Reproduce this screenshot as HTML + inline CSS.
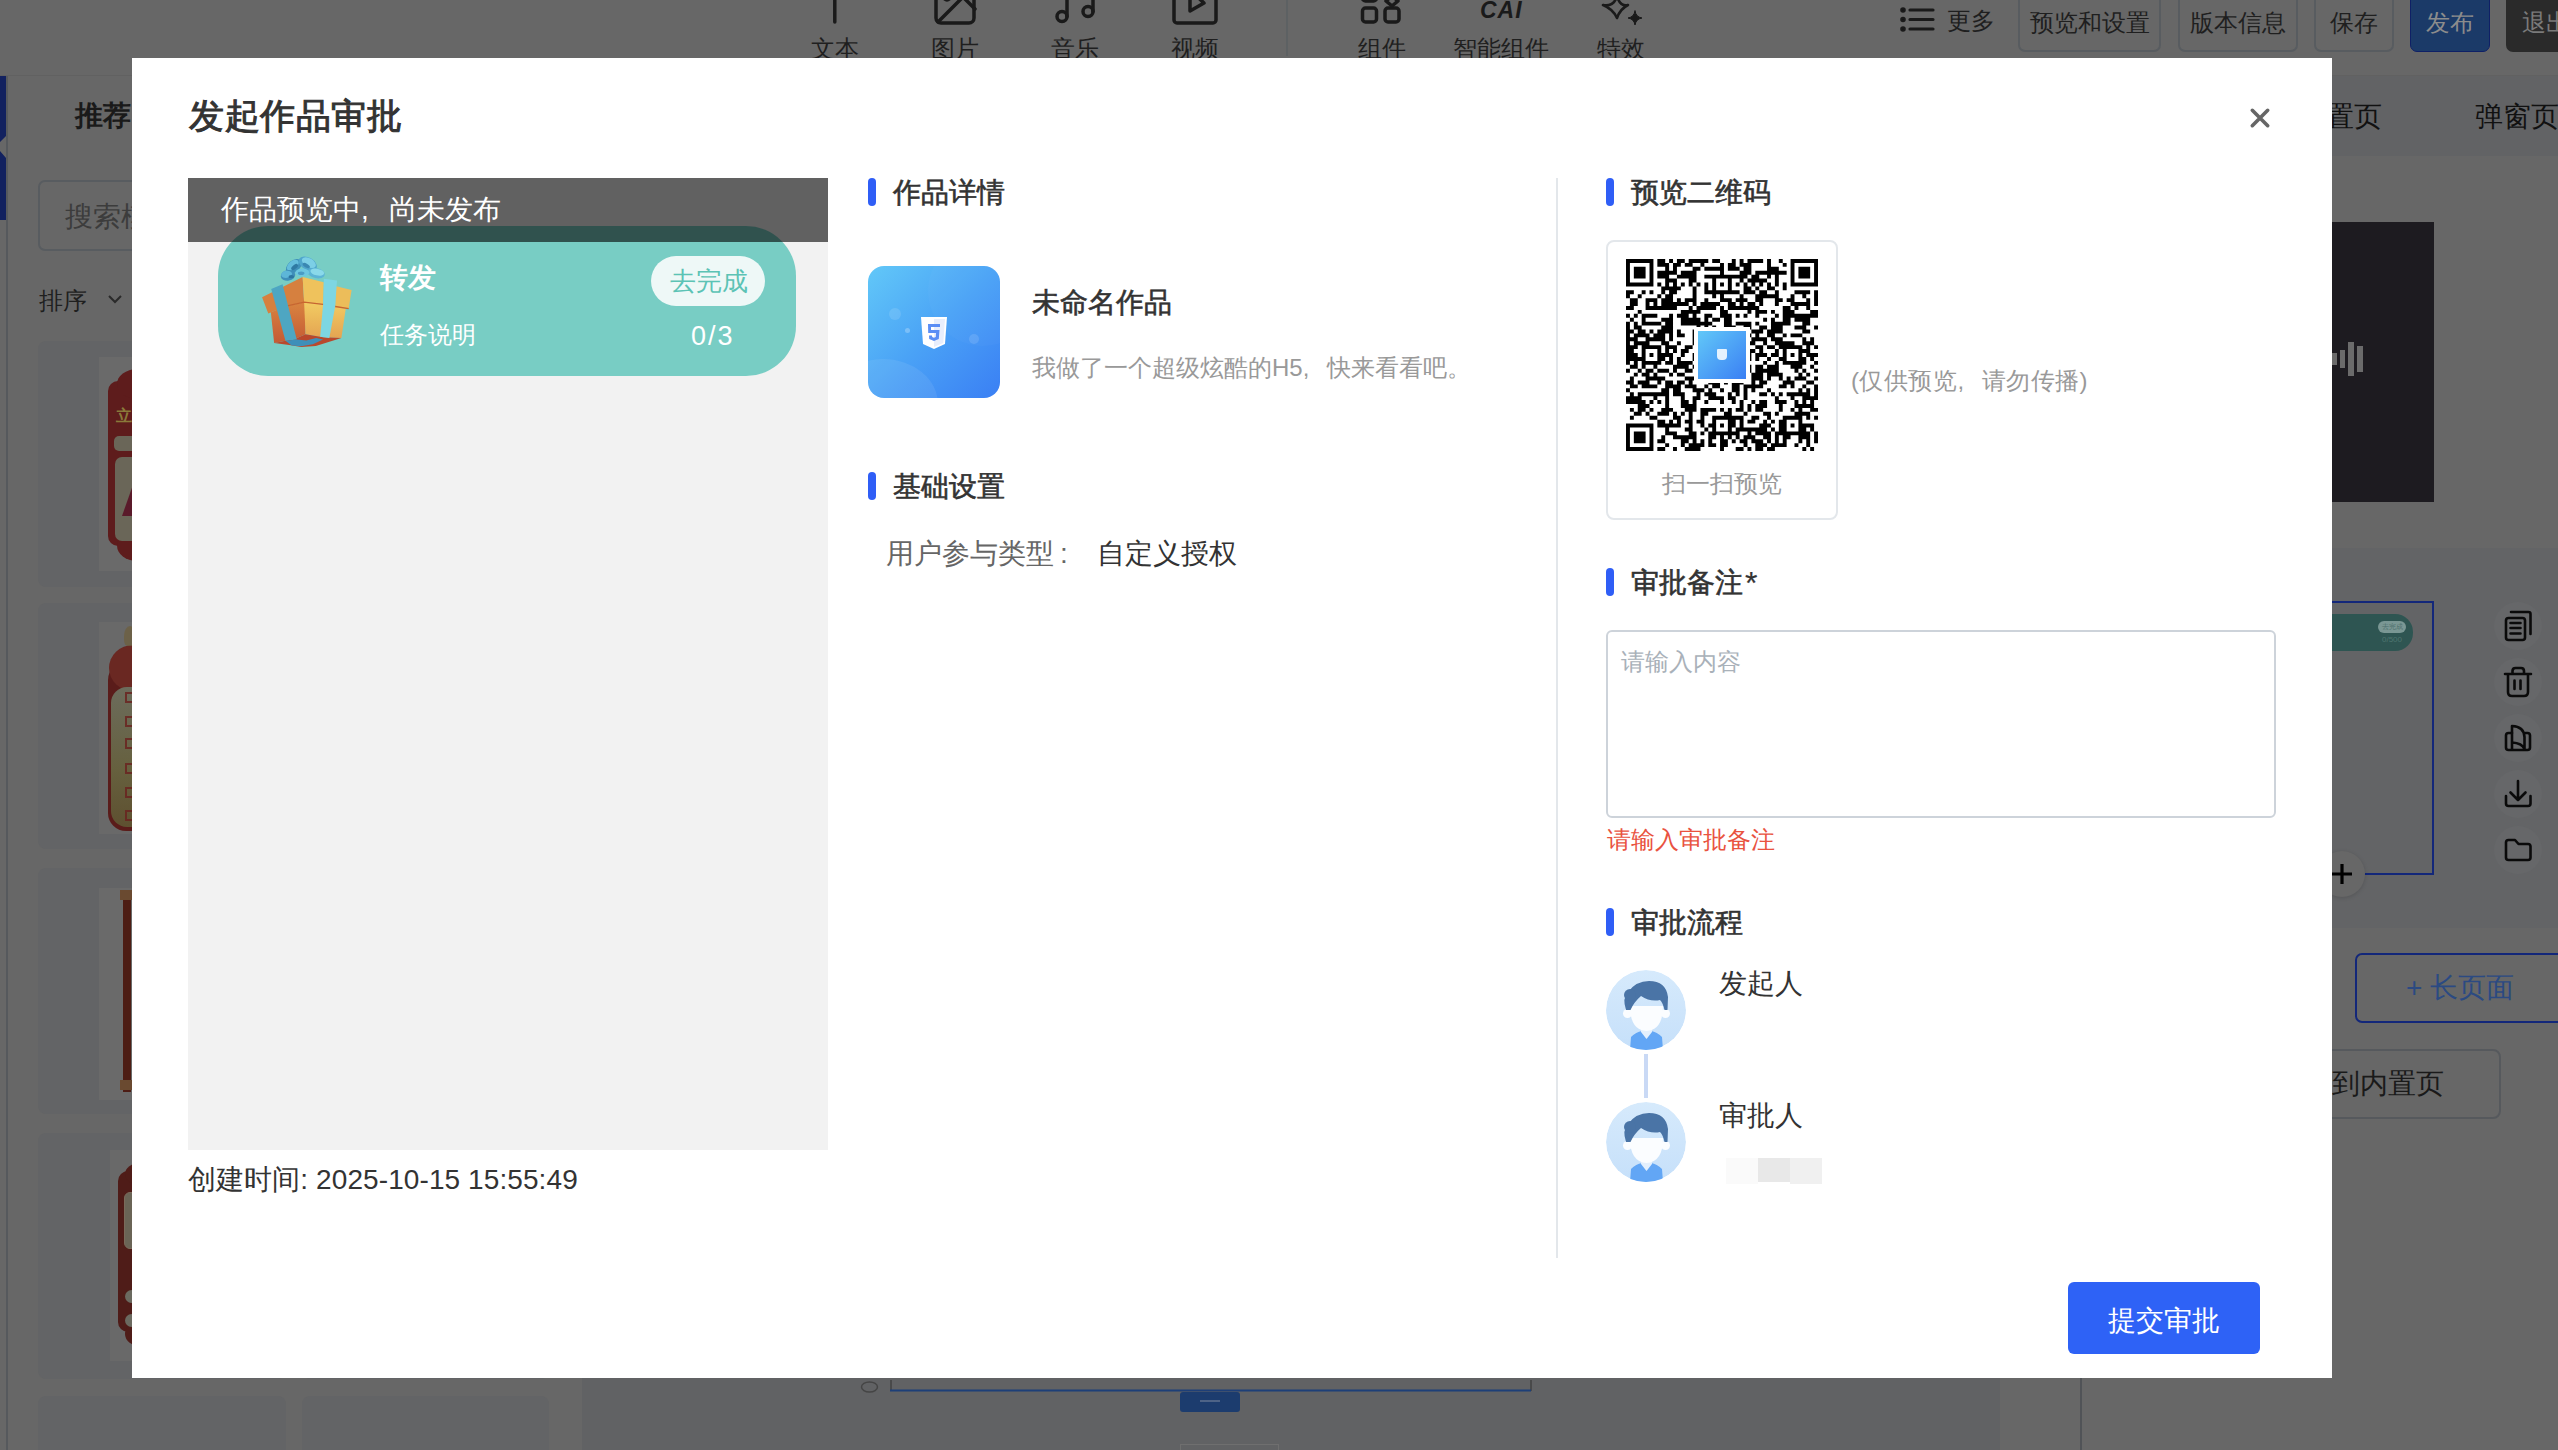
<!DOCTYPE html>
<html><head><meta charset="utf-8">
<style>
*{box-sizing:border-box;margin:0;padding:0}
html,body{width:2558px;height:1450px;overflow:hidden;background:#fff;font-family:"Liberation Sans",sans-serif;color:#333}
.a{position:absolute}
.t{position:absolute;white-space:nowrap;line-height:1}
#bg{position:absolute;left:0;top:0;width:2558px;height:1450px;background:#fff;overflow:hidden}
#ov{position:absolute;left:0;top:0;width:2558px;height:1450px;background:rgba(0,0,0,0.6)}
#modal{position:absolute;left:132px;top:58px;width:2200px;height:1320px;background:#fff;overflow:hidden}
.bar{position:absolute;width:8px;height:28px;border-radius:4px;background:#2f5ef6}
.sec{position:absolute;white-space:nowrap;line-height:1;font-size:28px;color:#333;-webkit-text-stroke:0.6px #333}
</style></head>
<body>
<div id="bg">
  <!-- header -->
  <div class="a" style="left:0;top:0;width:2558px;height:76px;background:#676767"></div>
  <div class="a" style="left:0;top:75px;width:2558px;height:1px;background:#616161"></div>
  <svg class="a" style="left:800px;top:0" width="880" height="30" viewBox="800 0 880 30" fill="none" stroke="#1a1a1a" stroke-width="3.5" stroke-linecap="round" stroke-linejoin="round">
    <path d="M834.8 -6V22"/>
    <rect x="936" y="-16" width="38" height="39" rx="5"/>
    <path d="M938 22L963 -3L975 9"/><circle cx="947" cy="-3" r="3"/>
    <circle cx="1062" cy="16.5" r="5"/><path d="M1067 16.5V-6"/>
    <circle cx="1088" cy="11.5" r="5"/><path d="M1093 11.5V-6"/>
    <rect x="1174" y="-16" width="42" height="39" rx="3"/>
    <path d="M1190 -10V11L1204 3Z"/>
    <rect x="1362.5" y="-14" width="14" height="15" rx="3"/>
    <rect x="1362.5" y="8" width="14" height="14" rx="3"/>
    <rect x="1385" y="8" width="14" height="14" rx="3"/>
    <path d="M1392 -4L1398 1L1392 6L1386 1Z"/>
    <path d="M1603 5Q1614 7 1617 -4Q1620 7 1628 5Q1620 9 1617 18Q1613 9 1603 5Z" stroke-width="2.6"/>
    <path d="M1635 11Q1636 17 1642 18Q1636 19 1635 25Q1634 19 1628 18Q1634 17 1635 11Z" fill="#1a1a1a" stroke-width="1"/>
  </svg>
  <div class="t" style="left:1480px;top:-1px;font-size:23px;font-weight:bold;font-style:italic;color:#1a1a1a;letter-spacing:1px">CAI</div>
  <div class="a" style="left:1286px;top:0;width:2px;height:56px;background:#5d6163"></div>
  <div class="t" style="left:811px;top:37px;font-size:24px;color:#1f1f1f">文本</div>
  <div class="t" style="left:931px;top:37px;font-size:24px;color:#1f1f1f">图片</div>
  <div class="t" style="left:1051px;top:37px;font-size:24px;color:#1f1f1f">音乐</div>
  <div class="t" style="left:1171px;top:37px;font-size:24px;color:#1f1f1f">视频</div>
  <div class="t" style="left:1358px;top:37px;font-size:24px;color:#1f1f1f">组件</div>
  <div class="t" style="left:1453px;top:37px;font-size:24px;color:#1f1f1f">智能组件</div>
  <div class="t" style="left:1597px;top:37px;font-size:24px;color:#1f1f1f">特效</div>
  <svg class="a" style="left:1898px;top:4px" width="40" height="32" viewBox="0 0 40 32" stroke="#1a1a1a" stroke-width="3.2" stroke-linecap="round">
    <path d="M12 6H35M12 15.5H35M12 25H35"/><circle cx="5" cy="6" r="1.2"/><circle cx="5" cy="15.5" r="1.2"/><circle cx="5" cy="25" r="1.2"/>
  </svg>
  <div class="t" style="left:1947px;top:9px;font-size:24px;color:#1f1f1f">更多</div>
  <div class="a" style="left:2018px;top:-10px;width:143px;height:62px;border:2px solid #585c60;border-radius:7px"></div>
  <div class="t" style="left:2030px;top:11px;font-size:24px;color:#1f1f1f">预览和设置</div>
  <div class="a" style="left:2178px;top:-10px;width:120px;height:62px;border:2px solid #585c60;border-radius:7px"></div>
  <div class="t" style="left:2190px;top:11px;font-size:24px;color:#1f1f1f">版本信息</div>
  <div class="a" style="left:2314px;top:-10px;width:80px;height:62px;border:2px solid #585c60;border-radius:7px"></div>
  <div class="t" style="left:2330px;top:11px;font-size:24px;color:#1f1f1f">保存</div>
  <div class="a" style="left:2410px;top:-10px;width:80px;height:62px;border:1.5px solid #0f2066;border-radius:7px;background:#1b3a68"></div>
  <div class="t" style="left:2426px;top:11px;font-size:24px;color:#8c8c8c">发布</div>
  <div class="a" style="left:2506px;top:-10px;width:80px;height:62px;border-radius:7px;background:#2a2a2a"></div>
  <div class="t" style="left:2522px;top:11px;font-size:24px;color:#7a7a7a">退出</div>

  <!-- left strip -->
  <div class="a" style="left:0;top:76px;width:7px;height:1374px;background:#676767"></div>
  <svg class="a" style="left:0;top:76px" width="7" height="144" viewBox="0 0 7 144"><path d="M0 0H6V60L0 66V75L6 82V144H0Z" fill="#12215f"/></svg>
  <div class="a" style="left:6px;top:76px;width:2px;height:1374px;background:#56595d"></div>
  <!-- left panel -->
  <div class="a" style="left:8px;top:76px;width:574px;height:1374px;background:#676767"></div>
  <div class="t" style="left:75px;top:102px;font-size:28px;font-weight:bold;color:#1a1a1a">推荐</div>
  <div class="a" style="left:38px;top:180px;width:520px;height:71px;border:2px solid #585c60;border-radius:7px"></div>
  <div class="t" style="left:65px;top:203px;font-size:28px;color:#3c3c3c">搜索模板</div>
  <div class="t" style="left:39px;top:289px;font-size:24px;color:#1f1f1f">排序</div>
  <svg class="a" style="left:106px;top:292px" width="18" height="14" viewBox="0 0 18 14"><path d="M3 4L9 10L15 4" fill="none" stroke="#2a2a2a" stroke-width="2"/></svg>
  <div class="a" style="left:38px;top:341px;width:248px;height:246px;border-radius:8px;background:#636466"></div><div class="a" style="left:302px;top:341px;width:247px;height:246px;border-radius:8px;background:#636466"></div><div class="a" style="left:38px;top:603px;width:248px;height:246px;border-radius:8px;background:#636466"></div><div class="a" style="left:302px;top:603px;width:247px;height:246px;border-radius:8px;background:#636466"></div><div class="a" style="left:38px;top:868px;width:248px;height:246px;border-radius:8px;background:#636466"></div><div class="a" style="left:302px;top:868px;width:247px;height:246px;border-radius:8px;background:#636466"></div><div class="a" style="left:38px;top:1133px;width:248px;height:246px;border-radius:8px;background:#636466"></div><div class="a" style="left:302px;top:1133px;width:247px;height:246px;border-radius:8px;background:#636466"></div><div class="a" style="left:38px;top:1396px;width:248px;height:246px;border-radius:8px;background:#636466"></div><div class="a" style="left:302px;top:1396px;width:247px;height:246px;border-radius:8px;background:#636466"></div>
  <div class="a" style="left:99px;top:357px;width:130px;height:214px;background:#6a6a6a"></div>
  <div class="a" style="left:108px;top:381px;width:110px;height:165px;border-radius:10px;background:#5e1c1c"></div>
  <div class="a" style="left:117px;top:369px;width:40px;height:30px;border-radius:50%;background:#5e1c1c"></div>
  <div class="a" style="left:117px;top:530px;width:40px;height:31px;border-radius:50%;background:#5e1c1c"></div>
  <div class="a" style="left:114px;top:436px;width:60px;height:15px;border-radius:5px;background:#6a6658"></div>
  <div class="a" style="left:115px;top:457px;width:60px;height:84px;border-radius:7px;background:#6a6658"></div>
  <div class="a" style="left:122px;top:482px;width:12px;height:34px;background:#5a1a2a;clip-path:polygon(100% 0,0 100%,100% 100%)"></div>
  <div class="t" style="left:116px;top:408px;font-size:16px;font-weight:bold;color:#8a7a3a">立</div>
  <div class="a" style="left:99px;top:622px;width:130px;height:212px;background:#696969"></div>
  <div class="a" style="left:108px;top:662px;width:110px;height:169px;border-radius:18px;background:#5a1c1a"></div>
  <div class="a" style="left:109px;top:645px;width:48px;height:46px;border-radius:50%;background:#6a2822"></div>
  <div class="a" style="left:124px;top:626px;width:12px;height:20px;border-radius:50% 50% 30% 30%;background:#6e5e3a;opacity:.7"></div>
  <div class="a" style="left:111px;top:687px;width:60px;height:140px;border-radius:16px;background:linear-gradient(#6c6c5c,#66603e 60%,#5e5030)"></div>
  <div class="a" style="left:125px;top:692px;width:7px;height:11px;border:2px solid #6a2420;border-right:none;opacity:.85"></div>
  <div class="a" style="left:125px;top:716px;width:7px;height:11px;border:2px solid #6a2420;border-right:none;opacity:.85"></div>
  <div class="a" style="left:125px;top:738px;width:7px;height:11px;border:2px solid #6a2420;border-right:none;opacity:.85"></div>
  <div class="a" style="left:125px;top:763px;width:7px;height:11px;border:2px solid #6a2420;border-right:none;opacity:.85"></div>
  <div class="a" style="left:125px;top:787px;width:7px;height:11px;border:2px solid #6a2420;border-right:none;opacity:.85"></div>
  <div class="a" style="left:125px;top:810px;width:7px;height:11px;border:2px solid #6a2420;border-right:none;opacity:.85"></div>
  <div class="a" style="left:99px;top:888px;width:130px;height:212px;background:#6a6a6a"></div>
  <div class="a" style="left:123px;top:892px;width:8px;height:200px;background:#4d1d14"></div>
  <div class="a" style="left:120px;top:890px;width:14px;height:10px;background:#6a4a30"></div>
  <div class="a" style="left:120px;top:1080px;width:14px;height:10px;background:#6a4a30"></div>
  <div class="a" style="left:110px;top:1150px;width:120px;height:211px;background:#696969"></div>
  <div class="a" style="left:118px;top:1171px;width:110px;height:161px;border-radius:10px;background:#4f1c18"></div>
  <div class="a" style="left:125px;top:1163px;width:30px;height:22px;border-radius:50%;background:#4f1c18"></div>
  <div class="a" style="left:125px;top:1322px;width:30px;height:24px;border-radius:50%;background:#4f1c18"></div>
  <div class="a" style="left:124px;top:1192px;width:50px;height:57px;border-radius:6px;border:1.5px solid #7a6a5a;background:#6a6456"></div>
  <div class="a" style="left:125px;top:1290px;width:13px;height:13px;border-radius:50%;background:#6b6a60"></div>
  <div class="a" style="left:125px;top:1314px;width:13px;height:13px;border-radius:50%;background:#6b6a60"></div>

  <!-- center canvas -->
  <div class="a" style="left:582px;top:76px;width:1418px;height:1374px;background:#616264"></div>
  <svg class="a" style="left:855px;top:1376px" width="700" height="74" viewBox="855 1376 700 74">
    <ellipse cx="869.5" cy="1387" rx="8" ry="5" fill="none" stroke="#454545" stroke-width="1.5"/>
    <path d="M891 1380V1390.5H1531V1380" fill="none" stroke="#3a3a3a" stroke-width="1.2"/>
    <path d="M890 1390.5H1531" stroke="#1d3f78" stroke-width="2"/>
    <rect x="1180" y="1392" width="60" height="20" rx="3" fill="#1c3c6e"/>
    <path d="M1200 1401H1220" stroke="#6f7f99" stroke-width="1.2"/>
    <rect x="1180.5" y="1444.5" width="98" height="10" fill="none" stroke="#6f6f6f" stroke-width="1"/>
  </svg>
  <!-- right side -->
  <div class="a" style="left:2000px;top:76px;width:80px;height:1374px;background:#676767"></div>
  <div class="a" style="left:2080px;top:76px;width:2px;height:1374px;background:#505357"></div>
  <div class="a" style="left:2082px;top:76px;width:476px;height:1374px;background:#676767"></div>
  <div class="a" style="left:2082px;top:76px;width:476px;height:80px;background:#626365"></div>
  <div class="t" style="left:2298px;top:103px;font-size:28px;color:#111">内置页</div>
  <div class="t" style="left:2475px;top:103px;font-size:28px;color:#111">弹窗页</div>
  <div class="a" style="left:2226px;top:222px;width:208px;height:280px;background:#1d1b20"></div>
  <div class="a" style="left:2331px;top:353px;width:6px;height:12px;background:#6b6b6b"></div><div class="a" style="left:2340px;top:350px;width:5px;height:18px;background:#6b6b6b"></div><div class="a" style="left:2348px;top:342px;width:6px;height:34px;background:#6b6b6b"></div><div class="a" style="left:2357px;top:346px;width:6px;height:26px;background:#6b6b6b"></div>
  <div class="a" style="left:2082px;top:548px;width:476px;height:380px;background:#636466"></div>
  <div class="a" style="left:2200px;top:601px;width:234px;height:274px;border:2px solid #13277a"></div>
  
  <div class="a" style="left:2220px;top:614px;width:193px;height:37px;border-radius:18px;background:#2e5552"></div>
  <div class="a" style="left:2378px;top:621px;width:28px;height:12px;border-radius:6px;background:#7a9794"></div><div class="t" style="left:2382px;top:623px;font-size:7px;color:#4a6e6a">去完成</div>
  <div class="t" style="left:2382px;top:636px;font-size:8px;color:#4f7571">0/500</div>
  <div class="a" style="left:2319px;top:851px;width:46px;height:46px;border-radius:50%;background:#676767;box-shadow:0 1px 4px rgba(0,0,0,0.15)"></div>
  <svg class="a" style="left:2330px;top:862px" width="24" height="24" viewBox="0 0 24 24"><path d="M12 2V22M2 12H22" stroke="#000" stroke-width="3.2"/></svg>
  <div class="a" style="left:2493.6px;top:601.5px;width:48px;height:48px;border-radius:50%;background:#666769"></div><div class="a" style="left:2493.6px;top:658.0px;width:48px;height:48px;border-radius:50%;background:#666769"></div><div class="a" style="left:2493.6px;top:713.5px;width:48px;height:48px;border-radius:50%;background:#666769"></div><div class="a" style="left:2493.6px;top:769.5px;width:48px;height:48px;border-radius:50%;background:#666769"></div><div class="a" style="left:2493.6px;top:826.0px;width:48px;height:48px;border-radius:50%;background:#666769"></div><svg class="a" style="left:2500px;top:600px" width="36" height="275" viewBox="2500 600 36 275" fill="none" stroke="#0a0a0a" stroke-width="2.6" stroke-linejoin="round" stroke-linecap="round">
  <rect x="2506" y="618" width="19" height="22" rx="2.5"/><path d="M2511 612H2528.5Q2530.5 612 2530.5 614V634"/><path d="M2510.5 623H2520.5M2510.5 628H2520.5M2510.5 633.5H2520.5"/>
  <path d="M2505 674H2531M2512.5 674V671Q2512.5 668 2515.5 668H2521Q2524 668 2524 671V674M2508 674V692Q2508 696 2512 696H2524Q2528 696 2528 692V674M2514.5 680.5V689M2520.5 680.5V689"/>
  <path d="M2512 733H2508.5Q2506 733 2506 735.5V747.5Q2506 750 2508.5 750H2527.5Q2530 750 2530 747.5V735.5Q2530 733 2527.5 733H2525.5"/>
  <path d="M2512 749V726Q2524 726.5 2524.5 737V749Q2522 743 2512 742.5"/>
  <path d="M2518 781V800M2510.5 792.5L2518 800L2525.5 792.5M2506 796V803.5Q2506 806 2508.5 806H2528Q2530.5 806 2530.5 803.5V796"/>
  <path d="M2506 842.5Q2506 840 2508.5 840H2515L2518.5 844H2528Q2530.5 844 2530.5 846.5V857.5Q2530.5 860 2528 860H2508.5Q2506 860 2506 857.5Z"/>
</svg>
  <div class="a" style="left:2355px;top:953px;width:240px;height:70px;border:2px solid #13277a;border-radius:7px"></div>
  <div class="t" style="left:2406px;top:974px;font-size:28px;color:#2b4a82">+ 长页面</div>
  <div class="a" style="left:2200px;top:1049px;width:301px;height:70px;border:2px solid #56595d;border-radius:8px"></div>
  <div class="t" style="left:2332px;top:1070px;font-size:28px;color:#1a1a1a">到内置页</div>
</div>

<div id="modal"></div>

<div id="m" class="a" style="left:0;top:0;width:2558px;height:1450px">
  <div class="t" style="left:189px;top:98px;font-size:35.3px;color:#333;letter-spacing:0.5px;-webkit-text-stroke:1px #333">发起作品审批</div>
  <svg class="a" style="left:2247px;top:105px" width="26" height="26" viewBox="0 0 26 26"><path d="M5.3 5.3L20.7 20.7M20.7 5.3L5.3 20.7" stroke="#666" stroke-width="3.6" stroke-linecap="round"/></svg>

  <!-- preview panel -->
  <div class="a" style="left:188px;top:178px;width:640px;height:972px;background:#f2f2f2;overflow:hidden">
    <div class="a" style="left:30px;top:48px;width:578px;height:150px;border-radius:50px;background:#78cdc4"></div>
    <svg class="a" style="left:62px;top:70px" width="112" height="106" viewBox="0 0 1532 1450">
      <defs>
        <linearGradient id="gl" x1="0" y1="0" x2="0" y2="1"><stop offset="0" stop-color="#d98440"/><stop offset="1" stop-color="#c45a34"/></linearGradient>
        <linearGradient id="gr" x1="0" y1="0" x2="0" y2="1"><stop offset="0" stop-color="#f2cc62"/><stop offset="1" stop-color="#e4a452"/></linearGradient>
      </defs>
      <path d="M285 880L480 800L760 740L760 1180L620 1240L330 1300Z" fill="url(#gl)"/>
      <path d="M740 740L1165 800L1310 830L1250 1230L1000 1220L760 1180Z" fill="url(#gr)"/>
      <path d="M330 1300L620 1240L760 1180L1000 1220L1250 1230L900 1340L700 1355L560 1330Z" fill="#b9482c"/>
      <path d="M165 675L720 395L740 740L480 800L250 895Z" fill="#d6803f"/>
      <path d="M720 395L1010 470L1000 770L740 740Z" fill="#efc25c"/><path d="M1165 520L1390 575L1350 830L1165 800Z" fill="#ecbd5a"/>
      <path d="M480 800L740 740L1000 770L1165 800L1350 830" fill="none" stroke="#c9652f" stroke-width="18"/>
      <path d="M290 560L445 495L640 1250L485 1270Z" fill="#4ea6c2"/>
      <path d="M1010 420L1190 445L1165 800L1085 1230L960 1215L1000 770Z" fill="#7dd6e2"/>
      <path d="M485 1270L640 1250L770 1265L905 1232L1000 1250L860 1315L700 1345L570 1335Z" fill="#3e8fb9"/>
      <ellipse cx="600" cy="250" rx="125" ry="80" fill="#3e90b9" transform="rotate(-40 600 250)"/>
      <ellipse cx="585" cy="235" rx="95" ry="55" fill="#64bddc" transform="rotate(-40 585 235)"/>
      <ellipse cx="610" cy="260" rx="55" ry="28" fill="#2f7aa3" transform="rotate(-40 610 260)"/>
      <ellipse cx="790" cy="215" rx="135" ry="85" fill="#4fa6cc" transform="rotate(30 790 215)"/>
      <ellipse cx="805" cy="200" rx="105" ry="60" fill="#7ccfe6" transform="rotate(30 805 200)"/>
      <ellipse cx="770" cy="240" rx="55" ry="26" fill="#3a88b2" transform="rotate(30 770 240)"/>
      <ellipse cx="520" cy="375" rx="100" ry="72" fill="#3f8fba" transform="rotate(-10 520 375)"/>
      <ellipse cx="500" cy="360" rx="75" ry="48" fill="#5db6d8" transform="rotate(-10 500 360)"/>
      <ellipse cx="565" cy="392" rx="38" ry="22" fill="#2d75a0"/>
      <ellipse cx="905" cy="345" rx="120" ry="68" fill="#5cb4d6" transform="rotate(12 905 345)"/>
      <ellipse cx="920" cy="330" rx="95" ry="45" fill="#8ad9ea" transform="rotate(12 920 330)"/>
      <ellipse cx="715" cy="335" rx="95" ry="55" fill="#6cc6e0"/>
      <ellipse cx="700" cy="345" rx="45" ry="25" fill="#4a9cc4"/>
      </svg>
    <div class="t" style="left:192px;top:86px;font-size:28px;font-weight:bold;color:#fff">转发</div>
    <div class="t" style="left:192px;top:145px;font-size:24px;color:#fff">任务说明</div>
    <div class="a" style="left:463px;top:78px;width:114px;height:50px;border-radius:25px;background:#eef8f7"></div>
    <div class="t" style="left:482px;top:90px;font-size:26px;color:#5cc3b5">去完成</div>
    <div class="t" style="left:503px;top:145px;font-size:27px;color:#fff;letter-spacing:2px">0/3</div>
    <div class="a" style="left:0;top:0;width:640px;height:64px;background:rgba(0,0,0,0.6)"></div>
    <div class="t" style="left:33px;top:18px;font-size:28px;color:#fff">作品预览中<span style="display:inline-block;width:28px">,</span>尚未发布</div>
  </div>
  <div class="t" style="left:188px;top:1166px;font-size:28px;color:#333;letter-spacing:0.09px">创建时间: 2025-10-15 15:55:49</div>

  <!-- middle column -->
  <div class="bar" style="left:868px;top:178px"></div>
  <div class="sec" style="left:893px;top:179px">作品详情</div>
  <div class="a" style="left:868px;top:266px;width:132px;height:132px;border-radius:16px;overflow:hidden;background:linear-gradient(135deg,#62c8f8 0%,#4aa2f6 50%,#3a7ff4 100%)">
    <div class="a" style="left:-40px;top:93px;width:110px;height:90px;border-radius:50%;background:rgba(255,255,255,0.08)"></div>
    <div class="a" style="left:60px;top:-30px;width:110px;height:110px;border-radius:50%;background:rgba(255,255,255,0.025)"></div>
    <div class="a" style="left:21px;top:42px;width:12px;height:12px;border-radius:50%;background:rgba(255,255,255,0.12)"></div>
    <div class="a" style="left:37px;top:62px;width:5px;height:5px;border-radius:50%;background:rgba(255,255,255,0.25)"></div>
    <div class="a" style="left:101px;top:68px;width:10px;height:10px;border-radius:50%;background:rgba(255,255,255,0.12)"></div>
    <svg class="a" style="left:52px;top:50px" width="28" height="34" viewBox="0 0 28 34">
      <path d="M1 1H27L25 28L14 33L3 28Z" fill="#fff"/>
      <path d="M14 3H25L23.3 27L14 31Z" fill="#e8eefc"/>
      <path d="M8 8H20V11H11V14H19.5L18.8 23L14 25L9.2 23L9 19.5H12L12.2 21L14 21.8L15.8 21L16 17H8.2Z" fill="#5b8ef5"/>
    </svg>
  </div>
  <div class="sec" style="left:1032px;top:289px">未命名作品</div>
  <div class="t" style="left:1032px;top:356px;font-size:24px;color:#999">我做了一个超级炫酷的H5<span style="display:inline-block;width:24px">,</span>快来看看吧。</div>
  <div class="bar" style="left:868px;top:472px"></div>
  <div class="sec" style="left:893px;top:473px">基础设置</div>
  <div class="t" style="left:886px;top:540px;font-size:28px;color:#666">用户参与类型<span style="display:inline-block;width:20px;text-align:center">:</span></div>
  <div class="t" style="left:1097px;top:540px;font-size:28px;color:#333">自定义授权</div>

  <div class="a" style="left:1556px;top:178px;width:2px;height:1080px;background:#e3e7eb"></div>

  <!-- right column -->
  <div class="bar" style="left:1606px;top:178px"></div>
  <div class="sec" style="left:1631px;top:179px">预览二维码</div>
  <div class="a" style="left:1606px;top:240px;width:232px;height:280px;border:2px solid #e3e7eb;border-radius:8px"></div>
  <svg class="a" style="left:1626px;top:259px;filter:blur(0.45px)" width="192" height="192" viewBox="0 0 49 49"><path d="M0 0h7v1h-7zM8 0h2v1h-2zM11 0h1v1h-1zM13 0h2v1h-2zM16 0h5v1h-5zM22 0h2v1h-2zM27 0h1v1h-1zM29 0h1v1h-1zM31 0h4v1h-4zM36 0h1v1h-1zM39 0h1v1h-1zM42 0h7v1h-7zM0 1h1v1h-1zM6 1h1v1h-1zM8 1h3v1h-3zM12 1h2v1h-2zM15 1h2v1h-2zM19 1h1v1h-1zM24 1h1v1h-1zM26 1h2v1h-2zM29 1h3v1h-3zM36 1h1v1h-1zM40 1h1v1h-1zM42 1h1v1h-1zM48 1h1v1h-1zM0 2h1v1h-1zM2 2h3v1h-3zM6 2h1v1h-1zM10 2h1v1h-1zM12 2h1v1h-1zM17 2h2v1h-2zM20 2h5v1h-5zM26 2h3v1h-3zM30 2h2v1h-2zM36 2h3v1h-3zM42 2h1v1h-1zM44 2h3v1h-3zM48 2h1v1h-1zM0 3h1v1h-1zM2 3h3v1h-3zM6 3h1v1h-1zM8 3h5v1h-5zM14 3h4v1h-4zM24 3h1v1h-1zM29 3h3v1h-3zM33 3h8v1h-8zM42 3h1v1h-1zM44 3h3v1h-3zM48 3h1v1h-1zM0 4h1v1h-1zM2 4h3v1h-3zM6 4h1v1h-1zM8 4h3v1h-3zM13 4h5v1h-5zM20 4h11v1h-11zM32 4h2v1h-2zM36 4h1v1h-1zM38 4h1v1h-1zM42 4h1v1h-1zM44 4h3v1h-3zM48 4h1v1h-1zM0 5h1v1h-1zM6 5h1v1h-1zM10 5h3v1h-3zM16 5h2v1h-2zM22 5h1v1h-1zM26 5h1v1h-1zM29 5h1v1h-1zM31 5h5v1h-5zM38 5h1v1h-1zM42 5h1v1h-1zM48 5h1v1h-1zM0 6h7v1h-7zM8 6h1v1h-1zM10 6h1v1h-1zM12 6h1v1h-1zM14 6h1v1h-1zM16 6h1v1h-1zM18 6h1v1h-1zM20 6h1v1h-1zM22 6h1v1h-1zM24 6h1v1h-1zM26 6h1v1h-1zM28 6h1v1h-1zM30 6h1v1h-1zM32 6h1v1h-1zM34 6h1v1h-1zM36 6h1v1h-1zM38 6h1v1h-1zM40 6h1v1h-1zM42 6h7v1h-7zM9 7h5v1h-5zM17 7h1v1h-1zM20 7h1v1h-1zM22 7h1v1h-1zM26 7h1v1h-1zM30 7h2v1h-2zM33 7h1v1h-1zM36 7h2v1h-2zM40 7h1v1h-1zM0 8h2v1h-2zM4 8h1v1h-1zM6 8h1v1h-1zM9 8h1v1h-1zM11 8h2v1h-2zM17 8h1v1h-1zM20 8h9v1h-9zM30 8h3v1h-3zM34 8h2v1h-2zM38 8h1v1h-1zM43 8h4v1h-4zM48 8h1v1h-1zM0 9h1v1h-1zM3 9h1v1h-1zM8 9h1v1h-1zM10 9h2v1h-2zM17 9h1v1h-1zM22 9h1v1h-1zM24 9h1v1h-1zM29 9h1v1h-1zM33 9h6v1h-6zM42 9h1v1h-1zM45 9h1v1h-1zM48 9h1v1h-1zM1 10h2v1h-2zM5 10h3v1h-3zM9 10h3v1h-3zM13 10h1v1h-1zM15 10h3v1h-3zM20 10h1v1h-1zM24 10h3v1h-3zM28 10h3v1h-3zM33 10h2v1h-2zM38 10h2v1h-2zM41 10h2v1h-2zM46 10h1v1h-1zM48 10h1v1h-1zM1 11h2v1h-2zM5 11h1v1h-1zM7 11h1v1h-1zM9 11h7v1h-7zM17 11h1v1h-1zM19 11h5v1h-5zM26 11h2v1h-2zM29 11h1v1h-1zM31 11h2v1h-2zM34 11h1v1h-1zM38 11h1v1h-1zM42 11h5v1h-5zM48 11h1v1h-1zM0 12h2v1h-2zM5 12h8v1h-8zM16 12h1v1h-1zM18 12h5v1h-5zM24 12h1v1h-1zM26 12h8v1h-8zM40 12h2v1h-2zM43 12h1v1h-1zM46 12h1v1h-1zM3 13h1v1h-1zM14 13h5v1h-5zM24 13h2v1h-2zM31 13h1v1h-1zM33 13h3v1h-3zM37 13h1v1h-1zM40 13h3v1h-3zM47 13h2v1h-2zM0 14h1v1h-1zM2 14h1v1h-1zM4 14h4v1h-4zM11 14h1v1h-1zM13 14h3v1h-3zM17 14h1v1h-1zM20 14h2v1h-2zM24 14h3v1h-3zM28 14h1v1h-1zM30 14h1v1h-1zM33 14h1v1h-1zM38 14h1v1h-1zM40 14h9v1h-9zM1 15h1v1h-1zM4 15h1v1h-1zM9 15h3v1h-3zM14 15h5v1h-5zM20 15h1v1h-1zM22 15h2v1h-2zM25 15h2v1h-2zM35 15h1v1h-1zM37 15h1v1h-1zM40 15h2v1h-2zM43 15h4v1h-4zM0 16h1v1h-1zM2 16h1v1h-1zM4 16h5v1h-5zM10 16h2v1h-2zM14 16h8v1h-8zM25 16h2v1h-2zM28 16h4v1h-4zM33 16h1v1h-1zM37 16h5v1h-5zM45 16h2v1h-2zM0 17h1v1h-1zM2 17h2v1h-2zM9 17h3v1h-3zM18 17h1v1h-1zM20 17h1v1h-1zM22 17h1v1h-1zM25 17h3v1h-3zM30 17h2v1h-2zM34 17h2v1h-2zM37 17h3v1h-3zM43 17h3v1h-3zM48 17h1v1h-1zM0 18h2v1h-2zM3 18h2v1h-2zM6 18h1v1h-1zM8 18h4v1h-4zM13 18h1v1h-1zM17 18h1v1h-1zM19 18h1v1h-1zM21 18h2v1h-2zM24 18h1v1h-1zM26 18h4v1h-4zM32 18h3v1h-3zM36 18h4v1h-4zM45 18h2v1h-2zM0 19h1v1h-1zM2 19h4v1h-4zM7 19h3v1h-3zM11 19h1v1h-1zM13 19h2v1h-2zM17 19h4v1h-4zM22 19h2v1h-2zM25 19h2v1h-2zM29 19h3v1h-3zM33 19h1v1h-1zM36 19h2v1h-2zM40 19h1v1h-1zM42 19h3v1h-3zM0 20h3v1h-3zM5 20h5v1h-5zM11 20h1v1h-1zM17 20h3v1h-3zM21 20h2v1h-2zM24 20h3v1h-3zM28 20h1v1h-1zM32 20h4v1h-4zM37 20h3v1h-3zM45 20h1v1h-1zM47 20h1v1h-1zM0 21h1v1h-1zM2 21h4v1h-4zM9 21h2v1h-2zM13 21h1v1h-1zM17 21h2v1h-2zM22 21h4v1h-4zM29 21h1v1h-1zM31 21h2v1h-2zM35 21h1v1h-1zM38 21h5v1h-5zM45 21h3v1h-3zM0 22h3v1h-3zM4 22h5v1h-5zM10 22h3v1h-3zM15 22h2v1h-2zM18 22h3v1h-3zM22 22h6v1h-6zM29 22h2v1h-2zM33 22h2v1h-2zM36 22h2v1h-2zM39 22h6v1h-6zM46 22h1v1h-1zM48 22h1v1h-1zM0 23h2v1h-2zM4 23h1v1h-1zM8 23h1v1h-1zM10 23h1v1h-1zM12 23h1v1h-1zM14 23h2v1h-2zM18 23h2v1h-2zM22 23h1v1h-1zM26 23h3v1h-3zM31 23h2v1h-2zM34 23h1v1h-1zM38 23h1v1h-1zM40 23h1v1h-1zM44 23h3v1h-3zM0 24h3v1h-3zM4 24h1v1h-1zM6 24h1v1h-1zM8 24h4v1h-4zM14 24h1v1h-1zM17 24h1v1h-1zM19 24h1v1h-1zM22 24h1v1h-1zM24 24h1v1h-1zM26 24h1v1h-1zM28 24h2v1h-2zM31 24h1v1h-1zM33 24h3v1h-3zM37 24h2v1h-2zM40 24h1v1h-1zM42 24h1v1h-1zM44 24h1v1h-1zM46 24h3v1h-3zM0 25h5v1h-5zM8 25h2v1h-2zM11 25h1v1h-1zM13 25h1v1h-1zM17 25h1v1h-1zM19 25h1v1h-1zM21 25h2v1h-2zM26 25h1v1h-1zM31 25h1v1h-1zM33 25h1v1h-1zM36 25h1v1h-1zM39 25h2v1h-2zM44 25h2v1h-2zM47 25h1v1h-1zM0 26h1v1h-1zM2 26h1v1h-1zM4 26h5v1h-5zM10 26h2v1h-2zM13 26h4v1h-4zM20 26h1v1h-1zM22 26h6v1h-6zM30 26h1v1h-1zM35 26h1v1h-1zM38 26h1v1h-1zM40 26h6v1h-6zM48 26h1v1h-1zM1 27h2v1h-2zM4 27h1v1h-1zM7 27h1v1h-1zM12 27h4v1h-4zM17 27h1v1h-1zM20 27h2v1h-2zM23 27h6v1h-6zM31 27h1v1h-1zM33 27h2v1h-2zM36 27h3v1h-3zM42 27h3v1h-3zM47 27h1v1h-1zM0 28h1v1h-1zM3 28h1v1h-1zM5 28h2v1h-2zM8 28h3v1h-3zM12 28h1v1h-1zM15 28h2v1h-2zM21 28h4v1h-4zM28 28h1v1h-1zM31 28h1v1h-1zM33 28h6v1h-6zM43 28h1v1h-1zM45 28h1v1h-1zM48 28h1v1h-1zM2 29h1v1h-1zM4 29h2v1h-2zM7 29h1v1h-1zM11 29h1v1h-1zM13 29h2v1h-2zM20 29h1v1h-1zM24 29h1v1h-1zM27 29h2v1h-2zM30 29h1v1h-1zM32 29h3v1h-3zM36 29h4v1h-4zM44 29h1v1h-1zM46 29h1v1h-1zM1 30h1v1h-1zM5 30h5v1h-5zM15 30h3v1h-3zM19 30h6v1h-6zM26 30h2v1h-2zM32 30h3v1h-3zM36 30h1v1h-1zM39 30h1v1h-1zM41 30h1v1h-1zM43 30h3v1h-3zM48 30h1v1h-1zM0 31h2v1h-2zM3 31h3v1h-3zM8 31h1v1h-1zM10 31h2v1h-2zM13 31h2v1h-2zM16 31h1v1h-1zM21 31h3v1h-3zM25 31h1v1h-1zM27 31h3v1h-3zM32 31h1v1h-1zM34 31h2v1h-2zM40 31h3v1h-3zM46 31h2v1h-2zM1 32h2v1h-2zM4 32h4v1h-4zM10 32h4v1h-4zM15 32h3v1h-3zM20 32h1v1h-1zM22 32h2v1h-2zM27 32h2v1h-2zM30 32h5v1h-5zM39 32h2v1h-2zM42 32h1v1h-1zM45 32h1v1h-1zM48 32h1v1h-1zM0 33h1v1h-1zM9 33h2v1h-2zM12 33h2v1h-2zM17 33h3v1h-3zM21 33h1v1h-1zM24 33h1v1h-1zM27 33h2v1h-2zM30 33h1v1h-1zM32 33h1v1h-1zM36 33h1v1h-1zM44 33h1v1h-1zM46 33h1v1h-1zM48 33h1v1h-1zM1 34h1v1h-1zM3 34h8v1h-8zM12 34h3v1h-3zM18 34h1v1h-1zM20 34h3v1h-3zM26 34h1v1h-1zM28 34h1v1h-1zM30 34h1v1h-1zM34 34h2v1h-2zM37 34h1v1h-1zM39 34h1v1h-1zM41 34h6v1h-6zM48 34h1v1h-1zM0 35h4v1h-4zM7 35h1v1h-1zM10 35h1v1h-1zM14 35h1v1h-1zM17 35h2v1h-2zM21 35h4v1h-4zM26 35h2v1h-2zM30 35h1v1h-1zM38 35h1v1h-1zM42 35h1v1h-1zM45 35h4v1h-4zM0 36h5v1h-5zM6 36h1v1h-1zM8 36h1v1h-1zM10 36h1v1h-1zM14 36h2v1h-2zM17 36h1v1h-1zM20 36h1v1h-1zM24 36h1v1h-1zM27 36h1v1h-1zM29 36h1v1h-1zM32 36h1v1h-1zM34 36h2v1h-2zM38 36h3v1h-3zM43 36h1v1h-1zM45 36h1v1h-1zM47 36h1v1h-1zM3 37h3v1h-3zM10 37h1v1h-1zM14 37h4v1h-4zM29 37h1v1h-1zM31 37h1v1h-1zM33 37h3v1h-3zM39 37h1v1h-1zM43 37h5v1h-5zM1 38h1v1h-1zM3 38h2v1h-2zM6 38h1v1h-1zM9 38h3v1h-3zM15 38h3v1h-3zM19 38h4v1h-4zM24 38h1v1h-1zM26 38h1v1h-1zM28 38h2v1h-2zM31 38h1v1h-1zM33 38h2v1h-2zM39 38h1v1h-1zM42 38h1v1h-1zM44 38h1v1h-1zM47 38h2v1h-2zM2 39h2v1h-2zM5 39h1v1h-1zM8 39h3v1h-3zM12 39h1v1h-1zM14 39h1v1h-1zM16 39h1v1h-1zM19 39h2v1h-2zM25 39h2v1h-2zM30 39h1v1h-1zM35 39h2v1h-2zM38 39h1v1h-1zM43 39h4v1h-4zM1 40h1v1h-1zM6 40h2v1h-2zM12 40h2v1h-2zM16 40h1v1h-1zM19 40h1v1h-1zM22 40h8v1h-8zM32 40h2v1h-2zM36 40h1v1h-1zM40 40h5v1h-5zM46 40h1v1h-1zM48 40h1v1h-1zM8 41h2v1h-2zM11 41h1v1h-1zM13 41h1v1h-1zM15 41h2v1h-2zM18 41h2v1h-2zM22 41h1v1h-1zM26 41h2v1h-2zM29 41h1v1h-1zM31 41h2v1h-2zM35 41h1v1h-1zM37 41h1v1h-1zM39 41h2v1h-2zM44 41h1v1h-1zM0 42h7v1h-7zM8 42h6v1h-6zM16 42h1v1h-1zM19 42h1v1h-1zM21 42h2v1h-2zM24 42h1v1h-1zM26 42h2v1h-2zM29 42h1v1h-1zM34 42h3v1h-3zM39 42h2v1h-2zM42 42h1v1h-1zM44 42h4v1h-4zM0 43h1v1h-1zM6 43h1v1h-1zM10 43h1v1h-1zM15 43h2v1h-2zM20 43h1v1h-1zM22 43h1v1h-1zM26 43h1v1h-1zM28 43h8v1h-8zM37 43h1v1h-1zM39 43h2v1h-2zM44 43h2v1h-2zM47 43h1v1h-1zM0 44h1v1h-1zM2 44h3v1h-3zM6 44h1v1h-1zM10 44h3v1h-3zM16 44h2v1h-2zM19 44h1v1h-1zM21 44h8v1h-8zM31 44h1v1h-1zM33 44h4v1h-4zM38 44h9v1h-9zM48 44h1v1h-1zM0 45h1v1h-1zM2 45h3v1h-3zM6 45h1v1h-1zM9 45h1v1h-1zM12 45h6v1h-6zM21 45h2v1h-2zM24 45h1v1h-1zM26 45h1v1h-1zM28 45h1v1h-1zM30 45h3v1h-3zM35 45h2v1h-2zM38 45h1v1h-1zM40 45h2v1h-2zM44 45h3v1h-3zM48 45h1v1h-1zM0 46h1v1h-1zM2 46h3v1h-3zM6 46h1v1h-1zM8 46h2v1h-2zM14 46h2v1h-2zM17 46h1v1h-1zM19 46h1v1h-1zM21 46h1v1h-1zM24 46h2v1h-2zM27 46h1v1h-1zM29 46h2v1h-2zM32 46h3v1h-3zM36 46h1v1h-1zM38 46h1v1h-1zM40 46h1v1h-1zM44 46h1v1h-1zM46 46h1v1h-1zM48 46h1v1h-1zM0 47h1v1h-1zM6 47h1v1h-1zM10 47h1v1h-1zM14 47h1v1h-1zM16 47h4v1h-4zM21 47h2v1h-2zM24 47h2v1h-2zM30 47h1v1h-1zM33 47h3v1h-3zM37 47h4v1h-4zM43 47h1v1h-1zM46 47h1v1h-1zM0 48h7v1h-7zM8 48h2v1h-2zM12 48h1v1h-1zM15 48h4v1h-4zM24 48h1v1h-1zM28 48h2v1h-2zM31 48h1v1h-1zM33 48h2v1h-2zM36 48h2v1h-2zM45 48h1v1h-1zM47 48h1v1h-1z" fill="#000"/></svg>
  <div class="a" style="left:1694px;top:327px;width:56px;height:56px;background:#fff"></div>
  <div class="a" style="left:1698px;top:331px;width:48px;height:48px;background:linear-gradient(135deg,#62c8f8,#3a7ff4)"></div>
  <div class="a" style="left:1717px;top:349px;width:10px;height:11px;background:#fff;border-radius:1px 1px 4px 4px;opacity:.85"></div>
  <div class="t" style="left:1662px;top:472px;font-size:24px;color:#999">扫一扫预览</div>
  <div class="t" style="left:1851px;top:369px;font-size:24px;color:#999;letter-spacing:0.5px">(仅供预览<span style="display:inline-block;width:24px">,</span>请勿传播)</div>

  <div class="bar" style="left:1606px;top:568px"></div>
  <div class="sec" style="left:1631px;top:569px">审批备注</div><div class="t" style="left:1745px;top:567px;font-size:32px;color:#333;-webkit-text-stroke:0.2px #333">*</div>
  <div class="a" style="left:1606px;top:630px;width:670px;height:188px;border:2px solid #cdd3da;border-radius:6px"></div>
  <div class="t" style="left:1621px;top:650px;font-size:24px;color:#a9b1b9">请输入内容</div>
  <div class="t" style="left:1607px;top:828px;font-size:24px;color:#e9533f">请输入审批备注</div>

  <div class="bar" style="left:1606px;top:908px"></div>
  <div class="sec" style="left:1631px;top:909px">审批流程</div>
  <svg class="a" style="left:1606px;top:970px" width="80" height="80" viewBox="0 0 80 80">
    <defs><clipPath id="c970"><circle cx="40" cy="40" r="40"/></clipPath><linearGradient id="g970" x1="0" y1="0" x2="0" y2="1"><stop offset="0" stop-color="#d6eafc"/><stop offset="1" stop-color="#c6e0fa"/></linearGradient></defs>
    <g clip-path="url(#c970)">
    <circle cx="40" cy="40" r="40" fill="url(#g970)"/>
    <path d="M24 80L25 67Q30 62 36 61L40.5 68L45 61Q51 62 56 67L57 80Z" fill="#62a6f5"/>
    <path d="M35 54H46V62L40.5 69L35 62Z" fill="#e4f0fd"/>
    <path d="M24 36Q24 60 40.5 61Q57 60 57 36Z" fill="#fbfdff"/>
    <circle cx="21.5" cy="43.5" r="4.5" fill="#fbfdff"/>
    <circle cx="59.5" cy="43.5" r="4.5" fill="#fbfdff"/>
    <path d="M20 40Q16 28 22 22Q30 11 43 11Q60 11 62 27L61.5 40L58.5 40Q57 33 54 30Q44 32 35 26Q28 32 24.5 40Z" fill="#4a74a6"/>
    <circle cx="24" cy="25" r="6" fill="#4a74a6"/>
    </g></svg>
  <div class="t" style="left:1719px;top:970px;font-size:28px;color:#333">发起人</div>
  <div class="a" style="left:1644px;top:1054px;width:4px;height:44px;background:#c9d9f5"></div>
  <svg class="a" style="left:1606px;top:1102px" width="80" height="80" viewBox="0 0 80 80">
    <defs><clipPath id="c1102"><circle cx="40" cy="40" r="40"/></clipPath><linearGradient id="g1102" x1="0" y1="0" x2="0" y2="1"><stop offset="0" stop-color="#d6eafc"/><stop offset="1" stop-color="#c6e0fa"/></linearGradient></defs>
    <g clip-path="url(#c1102)">
    <circle cx="40" cy="40" r="40" fill="url(#g1102)"/>
    <path d="M24 80L25 67Q30 62 36 61L40.5 68L45 61Q51 62 56 67L57 80Z" fill="#62a6f5"/>
    <path d="M35 54H46V62L40.5 69L35 62Z" fill="#e4f0fd"/>
    <path d="M24 36Q24 60 40.5 61Q57 60 57 36Z" fill="#fbfdff"/>
    <circle cx="21.5" cy="43.5" r="4.5" fill="#fbfdff"/>
    <circle cx="59.5" cy="43.5" r="4.5" fill="#fbfdff"/>
    <path d="M20 40Q16 28 22 22Q30 11 43 11Q60 11 62 27L61.5 40L58.5 40Q57 33 54 30Q44 32 35 26Q28 32 24.5 40Z" fill="#4a74a6"/>
    <circle cx="24" cy="25" r="6" fill="#4a74a6"/>
    </g></svg>
  <div class="t" style="left:1719px;top:1102px;font-size:28px;color:#333">审批人</div>
  <div class="a" style="left:1726px;top:1158px;width:32px;height:26px;background:#fafafa"></div>
  <div class="a" style="left:1758px;top:1158px;width:32px;height:24px;background:#e8e8e8"></div>
  <div class="a" style="left:1790px;top:1158px;width:32px;height:26px;background:#f0f0f0"></div>

  <div class="a" style="left:2068px;top:1282px;width:192px;height:72px;border-radius:6px;background:#2e62f6"></div>
  <div class="t" style="left:2108px;top:1307px;font-size:28px;color:#fff">提交审批</div>
</div>

</body></html>
